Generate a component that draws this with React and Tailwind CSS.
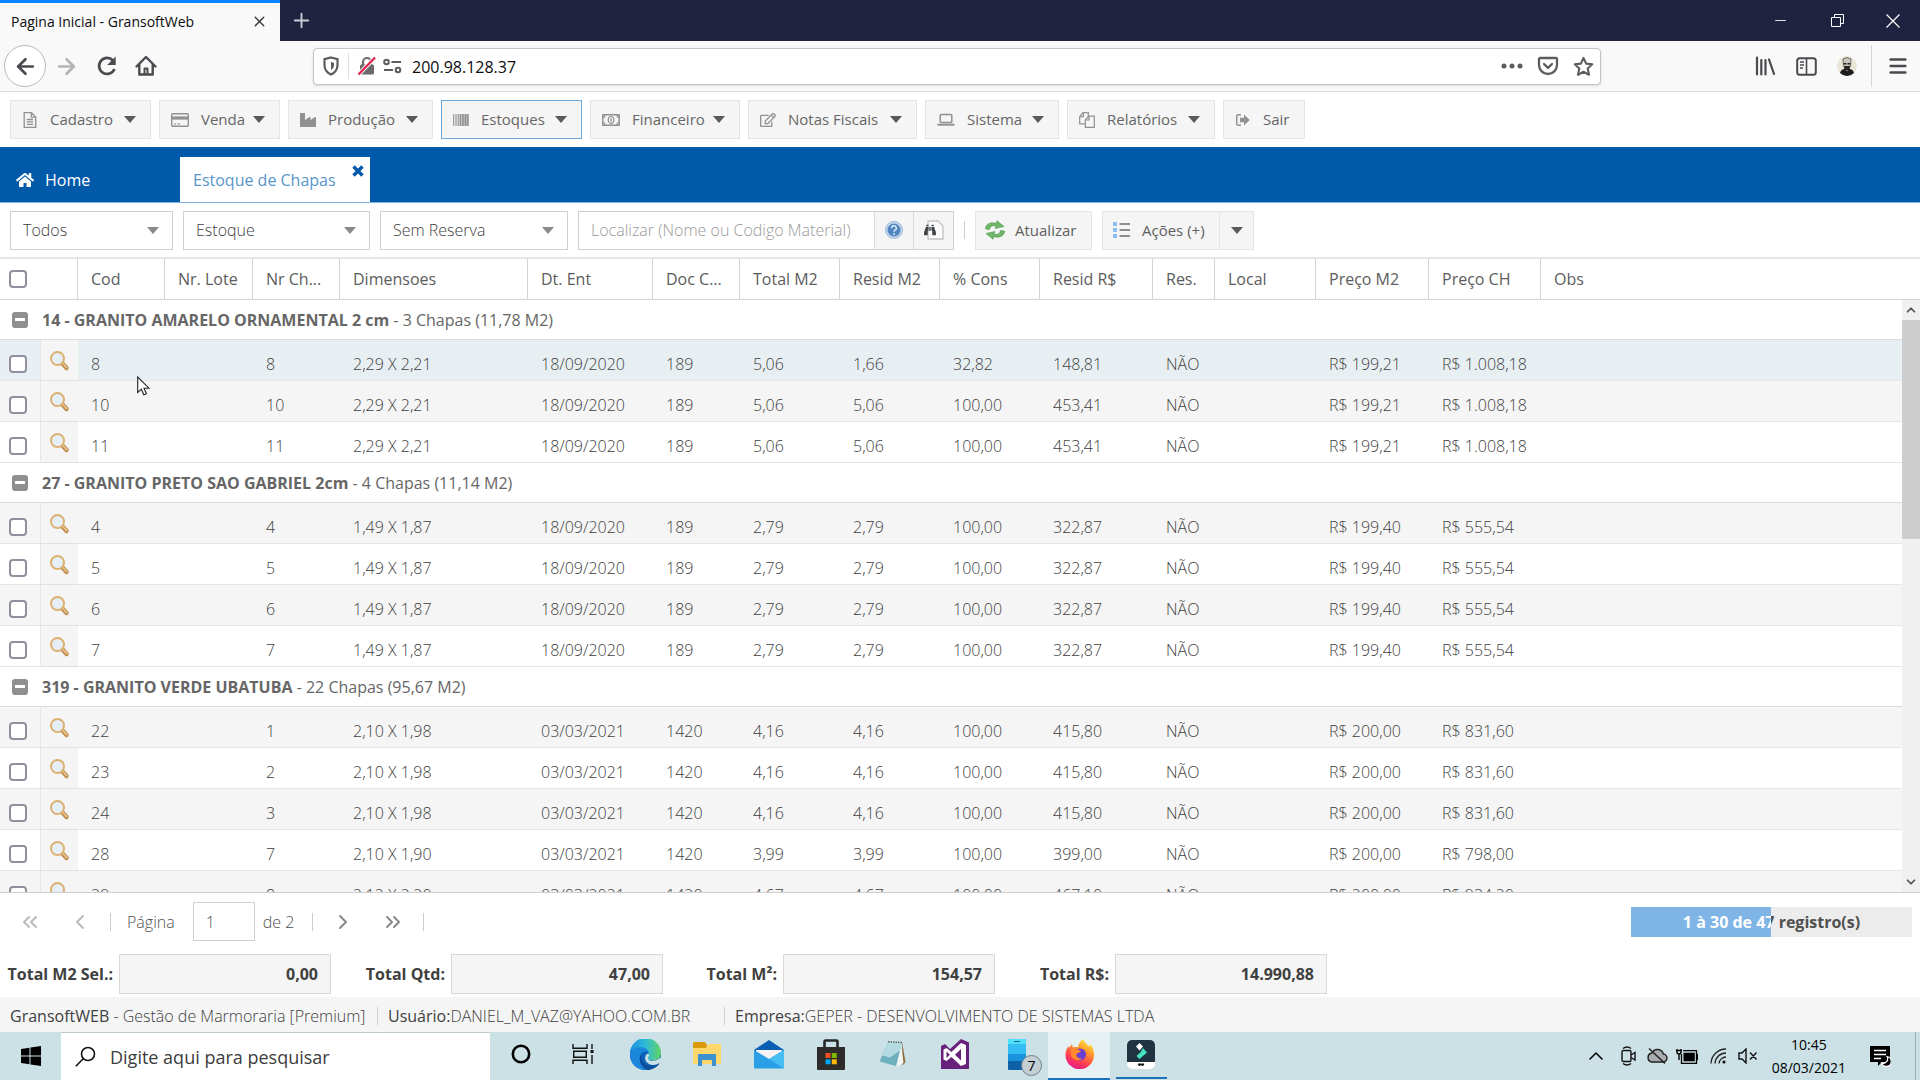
import React, { useState } from 'react';
import { ArrowLeft, ArrowRight, Plus, X, Minus, Menu, ChevronLeft, ChevronRight, ChevronsLeft, ChevronsRight, ChevronUp, ChevronDown } from 'lucide-react';
import { FaIndustry, FaRegEdit, FaHome, FaBinoculars } from 'react-icons/fa';

const MENU = [
  { label: 'Cadastro', icon: FileIcon, width: 'w-[141px]' },
  { label: 'Venda', icon: CardIcon, width: 'w-[121px]' },
  { label: 'Produção', icon: FaIndustry, width: 'w-[145px]' },
  { label: 'Estoques', icon: BarcodeIcon, width: 'w-[141px]', active: true },
  { label: 'Financeiro', icon: MoneyIcon, width: 'w-[150px]' },
  { label: 'Notas Fiscais', icon: FaRegEdit, width: 'w-[169px]' },
  { label: 'Sistema', icon: LaptopIcon, width: 'w-[134px]' },
  { label: 'Relatórios', icon: CopyIcon, width: 'w-[148px]' },
  { label: 'Sair', icon: ExitIcon, width: 'w-[82px]', plain: true },
];

const COLUMNS = [
  { label: 'Cod', width: 'w-[87px]' },
  { label: 'Nr. Lote', width: 'w-[88px]' },
  { label: 'Nr Ch...', width: 'w-[87px]' },
  { label: 'Dimensoes', width: 'w-[188px]' },
  { label: 'Dt. Ent', width: 'w-[125px]' },
  { label: 'Doc C...', width: 'w-[87px]' },
  { label: 'Total M2', width: 'w-[100px]' },
  { label: 'Resid M2', width: 'w-[100px]' },
  { label: '% Cons', width: 'w-[100px]' },
  { label: 'Resid R$', width: 'w-[113px]' },
  { label: 'Res.', width: 'w-[62px]' },
  { label: 'Local', width: 'w-[101px]' },
  { label: 'Preço M2', width: 'w-[113px]' },
  { label: 'Preço CH', width: 'w-[112px]' },
  { label: 'Obs', width: '' },
];

const GROUPS = [
  {
    title: '14 - GRANITO AMARELO ORNAMENTAL 2 cm',
    info: '3 Chapas (11,78 M2)',
    rows: [
      ['8', '', '8', '2,29 X 2,21', '18/09/2020', '189', '5,06', '1,66', '32,82', '148,81', 'NÃO', '', 'R$ 199,21', 'R$ 1.008,18', ''],
      ['10', '', '10', '2,29 X 2,21', '18/09/2020', '189', '5,06', '5,06', '100,00', '453,41', 'NÃO', '', 'R$ 199,21', 'R$ 1.008,18', ''],
      ['11', '', '11', '2,29 X 2,21', '18/09/2020', '189', '5,06', '5,06', '100,00', '453,41', 'NÃO', '', 'R$ 199,21', 'R$ 1.008,18', ''],
    ],
  },
  {
    title: '27 - GRANITO PRETO SAO GABRIEL 2cm',
    info: '4 Chapas (11,14 M2)',
    rows: [
      ['4', '', '4', '1,49 X 1,87', '18/09/2020', '189', '2,79', '2,79', '100,00', '322,87', 'NÃO', '', 'R$ 199,40', 'R$ 555,54', ''],
      ['5', '', '5', '1,49 X 1,87', '18/09/2020', '189', '2,79', '2,79', '100,00', '322,87', 'NÃO', '', 'R$ 199,40', 'R$ 555,54', ''],
      ['6', '', '6', '1,49 X 1,87', '18/09/2020', '189', '2,79', '2,79', '100,00', '322,87', 'NÃO', '', 'R$ 199,40', 'R$ 555,54', ''],
      ['7', '', '7', '1,49 X 1,87', '18/09/2020', '189', '2,79', '2,79', '100,00', '322,87', 'NÃO', '', 'R$ 199,40', 'R$ 555,54', ''],
    ],
  },
  {
    title: '319 - GRANITO VERDE UBATUBA',
    info: '22 Chapas (95,67 M2)',
    rows: [
      ['22', '', '1', '2,10 X 1,98', '03/03/2021', '1420', '4,16', '4,16', '100,00', '415,80', 'NÃO', '', 'R$ 200,00', 'R$ 831,60', ''],
      ['23', '', '2', '2,10 X 1,98', '03/03/2021', '1420', '4,16', '4,16', '100,00', '415,80', 'NÃO', '', 'R$ 200,00', 'R$ 831,60', ''],
      ['24', '', '3', '2,10 X 1,98', '03/03/2021', '1420', '4,16', '4,16', '100,00', '415,80', 'NÃO', '', 'R$ 200,00', 'R$ 831,60', ''],
      ['28', '', '7', '2,10 X 1,90', '03/03/2021', '1420', '3,99', '3,99', '100,00', '399,00', 'NÃO', '', 'R$ 200,00', 'R$ 798,00', ''],
      ['29', '', '8', '2,12 X 2,20', '03/03/2021', '1420', '4,67', '4,67', '100,00', '467,10', 'NÃO', '', 'R$ 200,00', 'R$ 934,20', ''],
    ],
  },
];

const TOTALS = [
  { id: 'm2sel', label: 'Total M2 Sel.:', value: '0,00' },
  { id: 'qtd', label: 'Total Qtd:', value: '47,00' },
  { id: 'm2', label: 'Total M²:', value: '154,57' },
  { id: 'rs', label: 'Total R$:', value: '14.990,88' },
];

export default function App() {
  return (
    <div className="flex h-screen flex-col overflow-hidden bg-white font-['Open_Sans',sans-serif] text-base text-[#404040]">
      <BrowserTabs />
      <BrowserToolbar />
      <MainMenu />
      <PageTabs />
      <FilterBar />
      <StockGrid />
      <Pager />
      <Totals />
      <StatusBar />
      <Taskbar />
    </div>
  );
}

/* ---------- Browser ---------- */

function BrowserTabs() {
  return (
    <div className="flex h-[41px] shrink-0 items-stretch bg-[#202340] text-white">
      <div className="flex w-[280px] items-center justify-between border-t-[3px] border-[#0a84ff] bg-[#f9f9fa] pr-3 pb-0.5 pl-[11px] text-[#0c0c0d]">
        <span className="text-[14px]">Pagina Inicial - GransoftWeb</span>
        <button aria-label="Fechar aba" className="text-[#3a3a3c]"><X size={17} strokeWidth={2} /></button>
      </div>
      <button aria-label="Nova aba" className="px-2.5 text-[#c8c9d2]"><Plus size={23} strokeWidth={2} /></button>
      <div className="ml-auto flex items-center">
        <button aria-label="Minimizar" className="flex w-[57px] justify-center"><Minus size={17} strokeWidth={1.2} /></button>
        <button aria-label="Restaurar" className="flex w-[57px] justify-center">
          <svg width="13" height="13" viewBox="0 0 13 13" fill="none" stroke="currentColor"><path d="M.5 3.500h9v9h-9zM3.500 3.500v-3h9v9h-3" /></svg>
        </button>
        <button aria-label="Fechar" className="flex w-[54px] justify-center">
          <svg width="14" height="14" viewBox="0 0 14 14" stroke="currentColor" strokeWidth="1.200"><path d="M.5.5l13 13M13.500.5l-13 13" /></svg>
        </button>
      </div>
    </div>
  );
}

function BrowserToolbar() {
  return (
    <div className="flex h-[51px] shrink-0 items-center border-b border-[#dcdcdc] bg-[#f9f9fa] pl-1 text-[#4a4a4f]">
      <button aria-label="Voltar" className="flex size-[42px] items-center justify-center rounded-full border border-[#b9b9bb] bg-white"><ArrowLeft size={25} strokeWidth={2.5} /></button>
      <button aria-label="Avançar" className="ml-2 text-[#b4b4b6]"><ArrowRight size={25} strokeWidth={2.5} /></button>
      <button aria-label="Recarregar" className="ml-4">
        <svg width="24" height="24" viewBox="0 0 24 24" fill="none" stroke="currentColor" strokeWidth="2.700"><path d="M19.500 15a8 8 0 1 1-1.500-8.500" /><path d="M20.700 2.500v8.500h-8.500z" fill="currentColor" stroke="none" /></svg>
      </button>
      <button aria-label="Página inicial" className="ml-[15px]">
        <svg width="24" height="24" viewBox="0 0 24 24" fill="none" stroke="currentColor" strokeWidth="2.400" strokeLinejoin="round" strokeLinecap="round"><path d="M2.500 12.500L12 3l9.500 9.500M5.300 10.500v10h13.400v-10" /><path d="M10.500 20v-5.500h3V20" strokeWidth="2" /></svg>
      </button>
      <div className="ml-[155px] flex h-[37px] w-[1288px] items-center rounded-sm border border-[#c4c4c6] bg-white pr-1.5 pl-2 text-[#5c5c61] shadow-sm">
        <svg width="18" height="20" viewBox="0 0 18 20" fill="none" stroke="currentColor" strokeWidth="2.200"><path d="M9 1.500l6.500 1.700v6c0 4.300-2.500 7.400-6.500 9.300-4-1.900-6.500-5-6.500-9.300v-6z" /><path d="M9 6v8c2-1.200 3-2.800 3-5V6.700z" fill="currentColor" stroke="none" /></svg>
        <span className="mx-2 h-[26px] w-px bg-[#e0e0e2]" />
        <svg width="20" height="20" viewBox="0 0 20 20" fill="none"><rect x="3" y="8.500" width="14" height="10" rx="1.500" fill="#6a6a6e" /><path d="M6 9V6a4 4 0 0 1 8 0v3" stroke="#6a6a6e" strokeWidth="2.200" /><path d="M1.500 18.500L18 1.500" stroke="#fff" strokeWidth="4" /><path d="M1.500 18.500L18 1.500" stroke="#e22850" strokeWidth="2.400" /></svg>
        <svg className="ml-1.5" width="19" height="16" viewBox="0 0 19 16" fill="none" stroke="currentColor" strokeWidth="2"><circle cx="3.500" cy="4" r="2.300" /><path d="M8.500 4H18M1 12h9" /><circle cx="15" cy="12" r="2.300" /></svg>
        <input aria-label="Endereço" defaultValue="200.98.128.37" className="ml-2.5 min-w-0 flex-1 bg-transparent pt-0.5 text-base text-[#0c0c0d] outline-none" />
        <button aria-label="Ações da página"><svg width="22" height="6" viewBox="0 0 22 6" fill="currentColor"><circle cx="3" cy="3" r="2.500" /><circle cx="11" cy="3" r="2.500" /><circle cx="19" cy="3" r="2.500" /></svg></button>
        <button aria-label="Pocket" className="ml-3.5"><svg width="22" height="20" viewBox="0 0 22 20" fill="none" stroke="currentColor" strokeWidth="2.300" strokeLinejoin="round" strokeLinecap="round"><path d="M3 2h16a1 1 0 0 1 1 1v6a9 9 0 0 1-18 0V3a1 1 0 0 1 1-1z" /><path d="M7 8l4 3.800L15 8" /></svg></button>
        <button aria-label="Favoritar" className="ml-3.5"><svg width="21" height="21" viewBox="0 0 24 24" fill="none" stroke="currentColor" strokeWidth="2.400" strokeLinejoin="round"><path d="M12 2.200l3 6.500 7 .8-5.200 4.800 1.500 7.200L12 18l-6.300 3.500 1.500-7.200L2 9.500l7-.8z" /></svg></button>
      </div>
      <div className="ml-auto flex items-center">
        <button aria-label="Biblioteca"><svg width="21" height="20" viewBox="0 0 21 20" stroke="currentColor" strokeWidth="2.200" strokeLinecap="round"><path d="M2 1.500v17M6.300 4v14.500M10.500 4v14.500M14 3.500l5 14.500" /></svg></button>
        <button aria-label="Painel lateral" className="ml-5"><svg width="21" height="19" viewBox="0 0 21 19" fill="none" stroke="currentColor" strokeWidth="2"><rect x="1.200" y="1.200" width="18.600" height="16.600" rx="2.500" /><path d="M10.500 1v17" strokeWidth="1.600" /><path d="M4 5h4M4 8h4M4 11h3" strokeWidth="1.300" /></svg></button>
        <button aria-label="Conta" className="ml-5">
          <svg width="20" height="20" viewBox="0 0 20 20"><circle cx="10" cy="10" r="10" fill="#e9e6d8" /><path d="M6 3q4-3 8 0l-.5 7L10 14l-3.500-4z" fill="#c9c6bd" stroke="#55524e" strokeWidth=".8" /><path d="M6.500 7h3v1.500h-3zM10.500 7h3v1.500h-3zM7 10h6l-.5 4H7.500z" fill="#222" /><path d="M3 17q1-4 5-4l2 2 2-2q4 0 5 4-3 3-7 3t-7-3z" fill="#1d1d1f" /></svg>
        </button>
        <span className="ml-3.5 h-[42px] w-px bg-[#d7d7db]" />
        <button aria-label="Abrir menu" className="mr-[11px] ml-[15px]"><Menu size={22} strokeWidth={2.7} /></button>
      </div>
    </div>
  );
}

/* ---------- App chrome ---------- */

function Caret({ className }) {
  return <svg className={className} width="12" height="7" viewBox="0 0 12 7" fill="currentColor"><path d="M0 0h12L6 7z" /></svg>;
}

function MainMenu() {
  return (
    <nav className="flex h-[55px] shrink-0 items-center gap-2 px-2.5">
      {MENU.map(({ label, icon: Icon, width, active, plain }) => (
        <button
          key={label}
          className={`flex h-[39px] items-center border bg-[#f5f5f5] pr-3.5 pl-[11px] text-[15px] text-[#666] ${width} ${active ? 'border-[#6ca8da]' : 'border-[#e4e4e4]'}`}
        >
          <Icon size={16} className="mr-3 shrink-0 text-[#919191]" />
          <span className="flex-1 text-left whitespace-nowrap">{label}</span>
          {!plain && <Caret className="text-[#5a5a5a]" />}
        </button>
      ))}
    </nav>
  );
}

function PageTabs() {
  return (
    <div className="flex h-[56px] shrink-0 items-end border-b border-[#7fb2e5] bg-[#005aa9]">
      <button className="flex h-[45px] w-[180px] items-center pl-4 text-white">
        <FaHome size={18} className="mr-[11px]" />
        Home
      </button>
      <div className="relative flex h-[45px] w-[190px] items-center bg-white">
        <button className="pl-[13px] text-[#5795cb]">Estoque de Chapas</button>
        <button aria-label="Fechar Estoque de Chapas" className="absolute top-2 right-1.5 text-[#005aa9]">
          <svg width="12" height="12" viewBox="0 0 12 12" stroke="currentColor" strokeWidth="3.400"><path d="M1.500 1.500l9 9M10.500 1.500l-9 9" /></svg>
        </button>
      </div>
    </div>
  );
}

function Combo({ label, options, width }) {
  return (
    <div className={`relative ${width}`}>
      <select aria-label={label} className="h-[39px] w-full appearance-none border border-[#d0d0d0] bg-white pl-3 font-light text-[#404040] outline-none">
        {options.map((o) => <option key={o}>{o}</option>)}
      </select>
      <Caret className="pointer-events-none absolute top-4 right-3.5 text-[#8a8a8a]" />
    </div>
  );
}

function FilterBar() {
  return (
    <div className="flex h-[54px] shrink-0 items-center px-2.5">
      <Combo label="Tipo" options={['Todos']} width="w-[163px]" />
      <Combo label="Origem" options={['Estoque']} width="ml-2.5 w-[187px]" />
      <Combo label="Reserva" options={['Sem Reserva']} width="ml-2.5 w-[188px]" />
      <div className="ml-2.5 flex h-[39px] w-[376px] border border-[#d0d0d0]">
        <input aria-label="Localizar" placeholder="Localizar (Nome ou Codigo Material)" className="min-w-0 flex-1 pl-3 font-light outline-none placeholder:text-[#999]" />
        <button aria-label="Ajuda" className="flex w-[39px] items-center justify-center border-l border-[#d9d9d9] bg-[#f5f5f5]">
          <svg width="18" height="18" viewBox="0 0 18 18"><circle cx="9" cy="9" r="8.500" fill="#c5d7ea" stroke="#9dbbdb" /><circle cx="9" cy="9" r="6.500" fill="#4f86c0" /><path d="M6.700 7.200a2.300 2.300 0 1 1 3.300 2c-.8.4-1 .8-1 1.600" fill="none" stroke="#dce9f6" strokeWidth="1.500" /><circle cx="9" cy="13" r="1" fill="#dce9f6" /></svg>
        </button>
        <button aria-label="Localizar material" className="flex w-[40px] items-center justify-center border-l border-[#d9d9d9] bg-[#f5f5f5]">
          <svg width="20" height="20" viewBox="0 0 20 20"><path d="M4 1h10l5 5v13H4z" fill="#fbfbfb" stroke="#c3c3c3" strokeWidth="1.300" /><FaBinoculars x="0" y="4" size={12} color="#3d4247" /></svg>
        </button>
      </div>
      <span className="mx-2.5 h-[18px] w-px bg-[#ccc]" />
      <button className="flex h-[39px] w-[117px] items-center border border-[#e4e4e4] bg-[#f5f5f5] pl-[9px] text-[15px] text-[#606060]">
        <svg className="mr-2.5" width="20" height="20" viewBox="0 0 20 20" fill="#6fb869" stroke="#4b984a" strokeWidth=".6"><path d="M.5 9C.5 4 6 1.500 11 3.500L12 .8l7 5.700-9 2 1-2.500C8 5 5 6 4.500 9.500z" /><path d="M19.500 11c0 5-5.500 7.500-10.500 5.500l-1 2.700-7-5.700 9-2-1 2.500c3 1 6 0 6.500-3.500z" /></svg>
        Atualizar
      </button>
      <div className="ml-2.5 flex h-[39px] w-[152px] border border-[#e4e4e4] bg-[#f5f5f5] text-[15px] text-[#606060]">
        <button className="flex flex-1 items-center pl-2.5">
          <svg className="mr-3" width="17" height="18" viewBox="0 0 17 18"><path d="M0 1h4v4H0zM0 7h4v4H0zM0 13h4v4H0z" fill="#8dbcf5" /><path d="M6.500 3H17M6.500 9H17M6.500 15H17" stroke="#6b6b6b" strokeWidth="1.700" /></svg>
          Ações (+)
        </button>
        <button aria-label="Mais ações" className="flex w-[34px] items-center justify-center border-l border-[#e4e4e4]"><Caret className="text-[#5a5a5a]" /></button>
      </div>
    </div>
  );
}

/* ---------- Grid ---------- */

function Check({ label }) {
  return (
    <input
      type="checkbox"
      aria-label={label}
      className="block size-[18px] appearance-none rounded-[4px] border-2 border-[#8f8f9d] bg-white checked:bg-[#0a84ff]"
    />
  );
}

function StockGrid() {
  const [hover, setHover] = useState('8');
  let index = 0;

  return (
    <div className="relative min-h-0 flex-1 overflow-hidden border-t-2 border-b border-t-[#e4e4e4] border-b-[#d0d0d0]">
      <table className="w-full table-fixed border-separate border-spacing-0 text-left">
        <colgroup>
          <col className="w-[41px]" />
          <col className="w-[37px]" />
          {COLUMNS.map((c) => <col key={c.label} className={c.width} />)}
        </colgroup>
        <thead>
          <tr className="h-[41px] text-[#5c5c5c]">
            <th colSpan={2} className="border-r border-b border-[#d4d4d4] pl-[9px]"><Check label="Selecionar tudo" /></th>
            {COLUMNS.map((c) => (
              <th key={c.label} className="border-r border-b border-[#d4d4d4] pl-[13px] font-normal whitespace-nowrap last:border-r-0">{c.label}</th>
            ))}
          </tr>
        </thead>
        {GROUPS.map((group) => (
          <tbody key={group.title}>
            <tr className="h-10">
              <td colSpan={17} className="border-b border-[#dcdcdc] pl-3">
                <div className="flex items-center">
                  <button aria-label="Recolher grupo" className="mr-3.5 flex size-4 items-center justify-center rounded-[3px] bg-[#8f8f8f]"><span className="h-[3px] w-2.5 bg-white" /></button>
                  <span className="text-[#666]"><b>{group.title}</b> - {group.info}</span>
                </div>
              </td>
            </tr>
            {group.rows.map((row) => {
              const striped = index++ % 2 === 1;
              return (
                <tr
                  key={row[0]}
                  onMouseEnter={() => setHover(row[0])}
                  className={`h-[41px] ${hover === row[0] ? 'bg-[#e8eff3]' : striped ? 'bg-[#f5f5f5]' : 'bg-white'}`}
                >
                  <td className="border-r border-b border-[#e6e6e6] pt-2 pl-[9px]"><Check label={`Selecionar chapa ${row[0]}`} /></td>
                  <td className="border-b border-[#e0e0e0] bg-[#f5f5f5] pt-0.5 pl-2">
                    <button aria-label={`Ver chapa ${row[0]}`} className="block"><Magnifier /></button>
                  </td>
                  {row.map((cell, i) => (
                    <td key={i} className="border-b border-[#e6e6e6] pt-2 pl-[13px] font-light whitespace-nowrap">{cell}</td>
                  ))}
                </tr>
              );
            })}
          </tbody>
        ))}
      </table>

      <div className="absolute top-[41px] right-0 bottom-0 flex w-[18px] flex-col bg-[#f0f0f0] text-[#505050]">
        <button aria-label="Rolar para cima" className="flex h-5 items-center justify-center"><ChevronUp size={14} strokeWidth={3} /></button>
        <div className="h-[37%] bg-[#cdcdcd]" />
        <button aria-label="Rolar para baixo" className="mt-auto flex h-5 items-center justify-center"><ChevronDown size={14} strokeWidth={3} /></button>
      </div>

      {/* mouse pointer resting on the list */}
      <svg className="absolute top-[117px] left-[137px]" width="13" height="20" viewBox="0 0 13 20"><path d="M.7 1v15.500l3.600-3.300 2.500 5.600 2.600-1.100-2.400-5.500h5z" fill="#fff" stroke="#222" strokeWidth="1.100" /></svg>
    </div>
  );
}

function Magnifier() {
  return (
    <svg width="22" height="22" viewBox="0 0 22 22">
      <path d="M13.500 13.500l4 4.500" stroke="#c08d50" strokeWidth="4.400" strokeLinecap="round" />
      <path d="M14 13.500l3.500 4" stroke="#e8c68f" strokeWidth="1.800" strokeLinecap="round" />
      <circle cx="8.500" cy="8.500" r="6.500" fill="#e6eff8" stroke="#dcb06f" strokeWidth="2" />
    </svg>
  );
}

/* ---------- Footer ---------- */

function Pager() {
  return (
    <div className="flex h-[57px] shrink-0 items-center pr-2 pl-[18px] font-light text-[#505050]">
      <button aria-label="Primeira página" disabled className="text-[#bbb]"><ChevronsLeft size={24} strokeWidth={2} /></button>
      <button aria-label="Página anterior" disabled className="ml-[26px] text-[#bbb]"><ChevronLeft size={24} strokeWidth={2} /></button>
      <span className="ml-[18px] h-[18px] w-px bg-[#ccc]" />
      <label htmlFor="page" className="ml-4">Página</label>
      <input id="page" defaultValue="1" className="ml-[18px] h-[39px] w-[62px] border border-[#d0d0d0] pl-3 outline-none" />
      <span className="ml-2">de 2</span>
      <span className="ml-[18px] h-[18px] w-px bg-[#ccc]" />
      <button aria-label="Próxima página" className="ml-[18px] text-[#8a8a8a]"><ChevronRight size={24} strokeWidth={2} /></button>
      <button aria-label="Última página" className="ml-[26px] text-[#8a8a8a]"><ChevronsRight size={24} strokeWidth={2} /></button>
      <span className="ml-[18px] h-[18px] w-px bg-[#ccc]" />
      <div className="relative ml-auto h-[30px] w-[281px] bg-[#ececec] text-center leading-[30px] font-bold text-[#505050]">
        1 à 30 de 47 registro(s)
        {/* same text again in white, clipped to the filled half */}
        <div aria-hidden="true" className="absolute inset-y-0 left-0 w-[140px] overflow-hidden bg-[#7fb4e6] text-white">
          <div className="w-[281px]">1 à 30 de 47 registro(s)</div>
        </div>
      </div>
    </div>
  );
}

function Totals() {
  return (
    <div className="flex h-[47px] shrink-0 items-center">
      {TOTALS.map((t) => (
        <div key={t.id} className="flex w-[332px] items-center font-bold">
          <label htmlFor={t.id} className="w-[113px] text-right">{t.label}</label>
          <input id={t.id} readOnly value={t.value} className="ml-1.5 h-10 w-[212px] border border-[#d8d8d8] bg-[#f5f5f5] pr-3 text-right outline-none" />
        </div>
      ))}
    </div>
  );
}

function StatusBar() {
  return (
    <div className="flex h-[35px] shrink-0 items-center bg-[#f5f5f5] pt-0.5 pl-2.5 whitespace-nowrap">
      <span className="w-[367px]">GransoftWEB <span className="font-light">- Gestão de Marmoraria [Premium]</span></span>
      <span className="h-[18px] w-px bg-[#d0d0d0]" />
      <span className="w-[346px] pl-2.5">Usuário:<span className="font-light">DANIEL_M_VAZ@YAHOO.COM.BR</span></span>
      <span className="h-[18px] w-px bg-[#d0d0d0]" />
      <span className="pl-2.5">Empresa:<span className="font-light">GEPER - DESENVOLVIMENTO DE SISTEMAS LTDA</span></span>
    </div>
  );
}

/* ---------- Taskbar ---------- */

function TaskButton({ label, active, open, children }) {
  return (
    <button
      aria-label={label}
      className={`flex h-full w-[62px] items-center justify-center border-b-2 ${active ? 'border-[#1a73b8] bg-[#e6f1f4]' : 'border-transparent'}`}
    >
      <span className={`flex h-12 w-[51px] items-center justify-center border-b-2 ${open ? 'border-[#1a73b8]' : 'border-transparent'}`}>
        {children}
      </span>
    </button>
  );
}

function Taskbar() {
  return (
    <div className="flex h-12 shrink-0 items-center bg-[#cbe1e6] text-black">
      <button aria-label="Iniciar" className="flex w-[61px] justify-center">
        <svg width="20" height="20" viewBox="0 0 20 20"><path d="M0 3l8.500-1.200v7.700H0zM9.500 1.600L20 0v9.500H9.500zM0 10.500h8.500v7.700L0 17zM9.500 10.500H20V20L9.500 18.400z" /></svg>
      </button>
      <div className="flex h-full w-[429px] items-center border-t border-[#bcc8cb] bg-white pl-3.5">
        <svg width="21" height="21" viewBox="0 0 21 21" fill="none" stroke="#111" strokeWidth="1.600"><circle cx="13" cy="8" r="6.500" /><path d="M8.500 12.500L.8 20.200" /></svg>
        <input aria-label="Pesquisar" placeholder="Digite aqui para pesquisar" className="ml-[14px] min-w-0 flex-1 text-lg outline-none placeholder:text-[#3c3c3c]" />
      </div>
      <TaskButton label="Cortana">
        <svg width="20" height="20" viewBox="0 0 20 20" fill="none" stroke="#000" strokeWidth="2.600"><circle cx="10" cy="10" r="8.200" /></svg>
      </TaskButton>
      <TaskButton label="Visão de tarefas">
        <svg width="22" height="20" viewBox="0 0 22 20" fill="none" stroke="#111" strokeWidth="1.400"><path d="M1 0v4.300h14V0M1 20v-3.700h14V20M1.700 7.200h12.600v6H1.700zM20 0v5M20 11v9" /><path d="M18.500 6h3v3h-3z" fill="#111" stroke="none" /></svg>
      </TaskButton>
      <TaskButton label="Edge"><EdgeIcon /></TaskButton>
      <TaskButton label="Explorador de arquivos">
        <svg width="28" height="26" viewBox="0 0 28 26"><path d="M0 2a1 1 0 0 1 1-1h11l2 3v4H0z" fill="#d99a0b" /><path d="M0 7h13l2-4h12a1 1 0 0 1 1 1v19H0z" fill="#ffd76b" /><path d="M5 13h18v12h-4v-5a1 1 0 0 0-1-1h-8a1 1 0 0 0-1 1v5H5z" fill="#3f90cf" /></svg>
      </TaskButton>
      <TaskButton label="Email">
        <svg width="30" height="29" viewBox="0 0 30 29"><path d="M0 10L15 0l15 10v18H0z" fill="#0a5fb4" /><path d="M2 10h26v9H2z" fill="#f3f3f3" /><path d="M0 10l15 9 15-9v18.500H0z" fill="#2b9fe6" /><path d="M30 10L0 10l15 9L30 28.500z" fill="none" /><path d="M30 10v18.500L15 19z" fill="#47bdf3" /></svg>
      </TaskButton>
      <TaskButton label="Microsoft Store">
        <svg width="28" height="31" viewBox="0 0 28 31"><path d="M7.500 9V2.500a1 1 0 0 1 1-1h11a1 1 0 0 1 1 1V9" fill="none" stroke="#262626" strokeWidth="2.600" /><path d="M0 8h28v22a1 1 0 0 1-1 1H1a1 1 0 0 1-1-1z" fill="#2d2c2b" /><path d="M8.500 14h5v5h-5z" fill="#f25022" /><path d="M14.800 14h5v5h-5z" fill="#7fba00" /><path d="M8.500 20.300h5v5h-5z" fill="#00a4ef" /><path d="M14.800 20.300h5v5h-5z" fill="#ffb900" /></svg>
      </TaskButton>
      <TaskButton label="Bloco de notas">
        <svg width="28" height="28" viewBox="0 0 28 28"><path d="M23 2l3.500 20-3 3.500z" fill="#8a6a3e" /><path d="M22 3l2.500 20-7 3.500z" fill="#f4f4f0" /><path d="M9 2.500l14 .5-6 23L.5 21.500z" fill="#6fb0bd" /><path d="M9 2.500l14 .5-2 7.500-10 7-7.500-2z" fill="#b5dbe2" /><path d="M9 1.800l14.500.7" stroke="#666" strokeWidth="1.500" strokeDasharray="1.500 1" /></svg>
      </TaskButton>
      <TaskButton label="Visual Studio">
        <svg width="28" height="30" viewBox="0 0 28 30"><path d="M0 7l4-2 5 5L20 0l8 3.500V30H0z" fill="#68217a" /><path d="M2.500 10.500l3-1.500 5 4 9.500-9 5 2v19l-5 2-9.500-9-5 4-3-1.500z" fill="#fff" /><path d="M5.500 12.500v6.500l3.300-3.200zM20 10l-6 5.800 6 5.700z" fill="#68217a" /></svg>
      </TaskButton>
      <TaskButton label="Seu telefone, 7 novas">
        <div className="relative">
          <svg width="18" height="31" viewBox="0 0 18 31"><path d="M0 1a1 1 0 0 1 1-1h16a1 1 0 0 1 1 1v29a1 1 0 0 1-1 1H1a1 1 0 0 1-1-1z" fill="#1060a8" /><path d="M0 1a1 1 0 0 1 1-1h16a1 1 0 0 1 1 1v21H0z" fill="#1a93dd" /><path d="M0 1a1 1 0 0 1 1-1h16a1 1 0 0 1 1 1v14H0z" fill="#33bdf2" /><path d="M0 1a1 1 0 0 1 1-1h16a1 1 0 0 1 1 1v4H0z" fill="#50e0fb" /><path d="M6 2.500h6" stroke="#17628f" /></svg>
          <span className="absolute -right-4 -bottom-1.5 flex size-[21px] items-center justify-center rounded-full border border-[#6f7f84] bg-[#c3cfd2] text-[14px]">7</span>
        </div>
      </TaskButton>
      <TaskButton label="Firefox" active><FirefoxIcon /></TaskButton>
      <TaskButton label="Filmora" open>
        <svg width="28" height="29" viewBox="0 0 28 29"><rect width="28" height="29" rx="5" fill="#fff" /><path d="M0 22V5a5 5 0 0 1 5-5h18a5 5 0 0 1 5 5v17z" fill="#1f3342" /><path d="M12.500 3l3.500 3.500-3.500 4L9 6.500z" fill="#fff" /><path d="M16 8l4 4.500-7.500 6.500L9.500 16l3.800-3.500z" fill="#47e0c0" /><path d="M11 24l1.500 2 1.500-1.800 1.500 1.800 1.500-2z" fill="#111" stroke="#111" /></svg>
      </TaskButton>

      <div className="ml-auto flex h-full items-center">
        <button aria-label="Ícones ocultos"><ChevronUp size={24} strokeWidth={1.5} /></button>
        <svg className="ml-3" width="18" height="20" viewBox="0 0 18 20" fill="none" stroke="#111" strokeWidth="1.400"><rect x="2" y="4.500" width="9" height="11" rx="1.500" /><path d="M11 9l4-2.500v7.500l-4-2.500M3 2.500q4-3 8 0M3 17.500q4 3 8 0" /></svg>
        <svg className="ml-2" width="22" height="18" viewBox="0 0 22 18" fill="none" stroke="#222" strokeWidth="1.500"><path d="M5.500 15h11a4 4 0 0 0 .8-8 6 6 0 0 0-11.300-1A4.600 4.600 0 0 0 5.500 15z" fill="#a9adb0" /><path d="M3 1.500l16 15" /></svg>
        <svg className="ml-2" width="22" height="16" viewBox="0 0 22 16"><path d="M7.500 4.700H18.800v8.600H7.500z" fill="#000" /><path d="M5.500 6v9.300H20.500V2.700H7M20.500 6.500h1v5h-1" fill="none" stroke="#000" strokeWidth="1.300" /><path d="M1 1v3a2 2 0 0 0 4 0V1M3 6v6M0 2.500h6" fill="none" stroke="#000" strokeWidth="1.400" /></svg>
        <svg className="ml-3" width="18" height="18" viewBox="0 0 18 18" fill="none" stroke="#222" strokeWidth="1.300"><path d="M1 16.500A15 15 0 0 1 16 2M5 16.500A11 11 0 0 1 16 6M9 16.500A7 7 0 0 1 16 10" /><circle cx="14" cy="15" r="1.600" fill="#111" stroke="none" /></svg>
        <svg className="ml-2.5" width="20" height="16" viewBox="0 0 20 16" fill="none" stroke="#111" strokeWidth="1.400"><path d="M1 5h3l4-4v14l-4-4H1zM12 4.500l6.500 7M18.500 4.500l-6.500 7" /></svg>
        <div className="ml-3.5 text-center text-[14px] leading-[23px]">
          <div>10:45</div>
          <div>08/03/2021</div>
        </div>
        <button aria-label="Notificações" className="ml-6">
          <svg width="21" height="21" viewBox="0 0 21 21"><path d="M0 0h20v16h-8l-4 4v-4H0z" /><path d="M4 4.500h12M4 8.500h12M4 12.500h7" stroke="#fff" strokeWidth="1.400" /><path d="M17 10.500a5 5 0 1 1-5.500 6.500 4.500 4.500 0 0 0 5.500-6.500z" stroke="#fff" strokeWidth="1.200" /></svg>
        </button>
        <span className="mr-1 ml-6 h-full w-px bg-[#98aeb4]" />
      </div>
    </div>
  );
}

function EdgeIcon() {
  return (
    <svg width="31" height="31" viewBox="0 0 31 31">
      <defs>
        <linearGradient id="edgeTop" x1="0" y1="0" x2="1" y2="0"><stop offset="0" stopColor="#1b8fe0" /><stop offset=".5" stopColor="#2fbbd8" /><stop offset="1" stopColor="#61d463" /></linearGradient>
      </defs>
      <circle cx="15.500" cy="15.500" r="15.500" fill="#0e62b8" />
      <path d="M0 15A15.500 15.500 0 0 1 31 14c0 5-4 7.500-8 7.500-3 0-5-1-5-2.300 0-1 1-1.700 1-3.700C19 12 16 9 11.500 9 6 9 1 12 0 15z" fill="url(#edgeTop)" />
      <path d="M0 16c1-5 5-8 10-8 5 0 8.500 3 9 6-2-2-6-2-8 1-3 5 0 12 6 15.500C8 32 0 25 0 16z" fill="#1a86dc" />
      <path d="M12 14c-3 6 2 12.500 9 12.500 3 0 6-1 7.500-2.500l1 .5C27 28.500 22 31 17 31 9 27 8 18 12 14z" fill="#0c4f9c" />
      <path d="M18.500 14.500c1.500 2-.5 3.500-.5 4.700 0 1.800 3 3 6 2.500 3-.4 5-2 6.500-3.500l.5 4-1.500 1.500c-5 4-12 2.300-14-2.500-1-3 .2-6.200 3-6.700z" fill="#cbe1e6" />
    </svg>
  );
}

function FirefoxIcon() {
  return (
    <svg width="29" height="30" viewBox="0 0 29 30">
      <defs>
        <linearGradient id="ffBody" x1=".8" y1="0" x2=".3" y2="1"><stop offset="0" stopColor="#fff04a" /><stop offset=".35" stopColor="#ff9a2b" /><stop offset=".7" stopColor="#ff3f4e" /><stop offset="1" stopColor="#e6188f" /></linearGradient>
      </defs>
      <path d="M18 0c1 3 4 4.500 6 7.500 1-.5 1-2 .8-3C28 8 29 12 29 16a14 14 0 0 1-28.500 0C.5 12 2 9 3.500 7l.5 2 3-4 .8 3.500c2-.7 4-.5 5.200 0C13.500 5 15 2 18 0z" fill="url(#ffBody)" />
      <circle cx="15" cy="15.500" r="6" fill="#6a3fd0" />
      <path d="M6 10c3-2 6 0 8 1l2 1c-1 2-4 1.500-4.500 3.500C11 18 14 20 17 19c-3 4-10 2-11-3z" fill="#ff8b2e" />
    </svg>
  );
}

/* ---------- Menu icons ---------- */

function FileIcon({ size, className }) {
  return <svg className={className} width={size} height={size} viewBox="0 0 16 16" fill="none" stroke="currentColor" strokeWidth="1.300"><path d="M2.200.7h7.300l4.200 4.200v10.400H2.200zM9.300.7v4.400h4.400M4.800 7.500h6.300M4.800 9.900h6.300M4.800 12.300h6.300" /></svg>;
}

function CardIcon({ size, className }) {
  return <svg className={className} width={size + 2} height={size} viewBox="0 0 18 16" fill="none" stroke="currentColor" strokeWidth="1.400"><rect x=".7" y="1.700" width="16.600" height="12.600" rx="1" /><path d="M1 6h16" strokeWidth="3.200" /><path d="M3 12h2M6.200 12h3" strokeWidth="1.100" /></svg>;
}

function BarcodeIcon({ size, className }) {
  return (
    <svg className={className} width={size} height={size} viewBox="0 0 16 16" stroke="currentColor">
      <path d="M.5 2v12M3 2v12M5.200 2v12" strokeWidth="1" opacity=".8" />
      <path d="M7.500 2v12M10 2v12M14.800 2v12" strokeWidth="1.600" />
      <path d="M12.500 2v12" strokeWidth="2" />
      <path d="M0 8h16" strokeWidth="12" opacity=".25" />
    </svg>
  );
}

function MoneyIcon({ size, className }) {
  return <svg className={className} width={size + 2} height={size} viewBox="0 0 18 16" fill="none" stroke="currentColor" strokeWidth="1.500"><path d="M.8 2.800h16.400v10.400H.8z" /><ellipse cx="9" cy="8" rx="2.800" ry="3.500" strokeWidth="1.200" /><path d="M9 6v4.200M1 5.500q2 0 2-2.500M17 5.500q-2 0-2-2.500M1 10.500q2 0 2 2.500M17 10.500q-2 0-2 2.500" strokeWidth="1.200" /></svg>;
}

function LaptopIcon({ size, className }) {
  return <svg className={className} width={size + 2} height={size} viewBox="0 0 18 16" fill="none" stroke="currentColor" strokeWidth="1.500"><rect x="3.200" y="2.500" width="11.600" height="8" rx="1" /><path d="M.5 12.700h17" strokeWidth="2" /></svg>;
}

function CopyIcon({ size, className }) {
  return <svg className={className} width={size} height={size} viewBox="0 0 16 16" fill="none" stroke="currentColor" strokeWidth="1.200"><path d="M6.300 11.800H.7V4.500L4 .7h5.300V4M4.300.7v4H.7M6.300 8l3.300-3.800h5.700v11.100h-9zM10 4.200V8H6.300" /></svg>;
}

function ExitIcon({ size, className }) {
  return <svg className={className} width={size} height={size} viewBox="0 0 16 16" fill="none" stroke="currentColor" strokeWidth="1.500"><path d="M6 2.800H3.200a1.500 1.500 0 0 0-1.500 1.500v7.400a1.500 1.500 0 0 0 1.500 1.500H6" /><path d="M5 5.800h4V2.600L14.800 8 9 13.400v-3.200H5z" fill="currentColor" stroke="none" /></svg>;
}
